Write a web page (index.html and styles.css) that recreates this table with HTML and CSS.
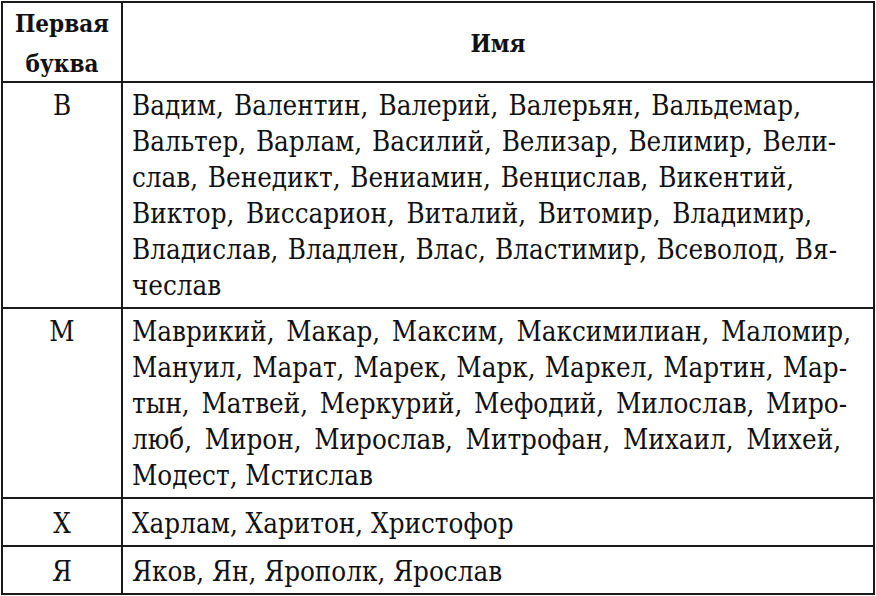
FILE: index.html
```html
<!DOCTYPE html>
<html lang="ru">
<head>
<meta charset="utf-8">
<title>Имена</title>
<link rel="stylesheet" href="styles.css">
</head>
<body>
<table class="names">
  <colgroup><col class="c1"><col class="c2"></colgroup>
  <thead>
    <tr>
      <th class="h1"><div class="stack">Первая<br>буква</div></th>
      <th class="h2">Имя</th>
    </tr>
  </thead>
  <tbody>
    <tr class="r-b">
      <td class="letter">В</td>
      <td class="list">
        <div class="ln j w669">Вадим, Валентин, Валерий, Валерьян, Вальдемар,</div>
        <div class="ln j w704">Вальтер, Варлам, Василий, Велизар, Велимир, Вели-</div>
        <div class="ln j w662">слав, Венедикт, Вениамин, Венцислав, Викентий,</div>
        <div class="ln j w680">Виктор, Виссарион, Виталий, Витомир, Владимир,</div>
        <div class="ln j w705">Владислав, Владлен, Влас, Властимир, Всеволод, Вя-</div>
        <div class="ln">чеслав</div>
      </td>
    </tr>
    <tr class="r-m">
      <td class="letter">М</td>
      <td class="list">
        <div class="ln j w719">Маврикий, Макар, Максим, Максимилиан, Маломир,</div>
        <div class="ln j w715 tight">Мануил, Марат, Марек, Марк, Маркел, Мартин, Мар-</div>
        <div class="ln j w715">тын, Матвей, Меркурий, Мефодий, Милослав, Миро-</div>
        <div class="ln j w709">люб, Мирон, Мирослав, Митрофан, Михаил, Михей,</div>
        <div class="ln">Модест, Мстислав</div>
      </td>
    </tr>
    <tr class="r-x">
      <td class="letter">Х</td>
      <td class="list"><div class="ln">Харлам, Харитон, Христофор</div></td>
    </tr>
    <tr class="r-ya">
      <td class="letter">Я</td>
      <td class="list"><div class="ln">Яков, Ян, Ярополк, Ярослав</div></td>
    </tr>
  </tbody>
</table>
</body>
</html>
```
FILE: styles.css
```css
html, body {
  margin: 0;
  padding: 0;
  background: #ffffff;
}
body {
  padding: 1px 0 0 1px;
  color: #111111;
}
.names {
  border-collapse: collapse;
  width: 874px;
  table-layout: fixed;
  font-family: "DejaVu Serif Condensed", "DejaVu Serif", serif;
}
.names th, .names td {
  font-family: "DejaVu Serif Condensed", "DejaVu Serif", serif;
  border: 2px solid #1a1a1a;
  padding: 0;
}
.c1 { width: 120px; }
.names th {
  font-weight: bold;
  font-size: 24px;
  text-align: center;
  vertical-align: top;
}
.names .h1 .stack {
  height: 78px;
  box-sizing: border-box;
  padding-top: 1px;
  line-height: 40px;
}
.names .h2 {
  line-height: 40px;
  padding-top: 21px;
}
.names .letter {
  text-align: center;
  vertical-align: top;
  font-size: 27.5px;
  line-height: 36px;
  padding: 4px 0 4px 0;
}
.names .list {
  font-size: 27.5px;
  line-height: 36px;
  padding: 4px 8px 4px 9px;
  vertical-align: top;
}
.ln { white-space: nowrap; }
.ln.j {
  white-space: normal;
  text-align: justify;
  text-align-last: justify;
  height: 36px;
  overflow: hidden;
}
.ln.tight { word-spacing: -4px; }
.w662 { width: 662px; }
.w669 { width: 669px; }
.w680 { width: 680px; }
.w704 { width: 704px; }
.w705 { width: 705px; }
.w709 { width: 709px; }
.w715 { width: 715px; }
.w719 { width: 719px; }
.names .r-x td, .names .r-ya td {
  padding-top: 6px;
  padding-bottom: 4px;
}
```
